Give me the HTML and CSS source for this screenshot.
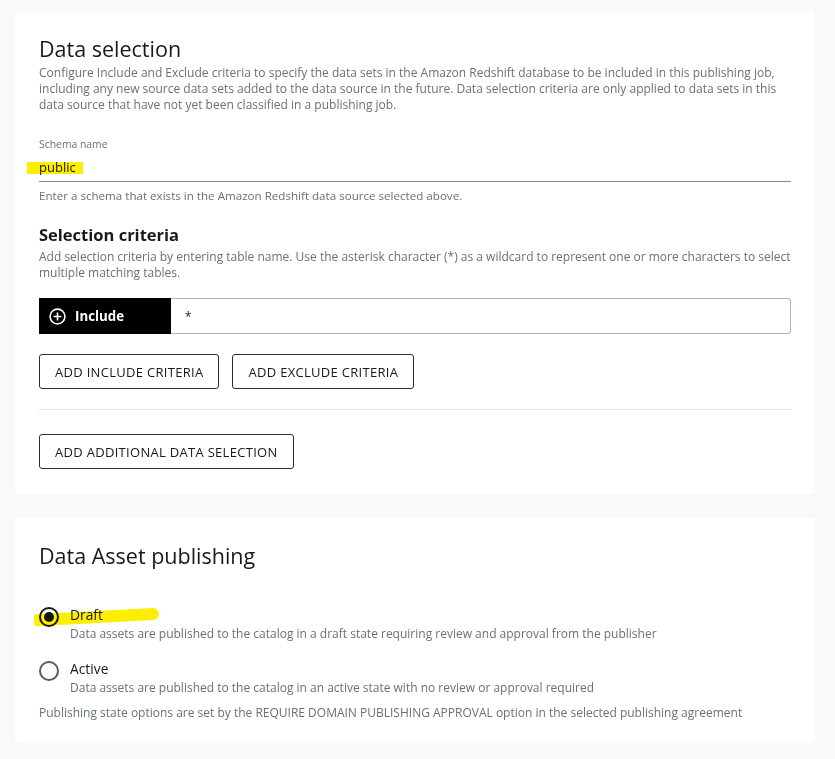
FILE: index.html
```html
<!DOCTYPE html>
<html>
<head>
<meta charset="utf-8">
<link rel="stylesheet" href="styles.css">
</head>
<body>
<div class="page">
  <section class="card card-one">
    <h1 class="title">Data selection</h1>
    <p class="desc">Configure Include and Exclude criteria to specify the data sets in the Amazon Redshift database to be included in this publishing job, including any new source data sets added to the data source in the future. Data selection criteria are only applied to data sets in this data source that have not yet been classified in a publishing job.</p>

    <div class="field">
      <div class="field-label">Schema name</div>
      <div class="field-value"><span class="value-text">public</span><span class="hl-box"></span></div>
      <div class="field-help">Enter a schema that exists in the Amazon Redshift data source selected above.</div>
    </div>

    <h2 class="subtitle">Selection criteria</h2>
    <p class="desc sub-desc">Add selection criteria by entering table name. Use the asterisk character (*) as a wildcard to represent one or more characters to select multiple matching tables.</p>

    <div class="criteria-row">
      <div class="criteria-type">
        <svg class="plus-icon" width="17" height="17" viewBox="0 0 17 17"><circle cx="8.5" cy="8.5" r="7.4" fill="none" stroke="#fff" stroke-width="1.6"/><path d="M8.5 4.6v7.8M4.6 8.5h7.8" stroke="#fff" stroke-width="1.6"/></svg>
        <span>Include</span>
      </div>
      <div class="criteria-input">*</div>
    </div>

    <div class="btn-row">
      <button class="btn">ADD INCLUDE CRITERIA</button>
      <button class="btn">ADD EXCLUDE CRITERIA</button>
    </div>

    <div class="divider"></div>

    <button class="btn btn-wide">ADD ADDITIONAL DATA SELECTION</button>
  </section>

  <section class="card card-two">
    <h1 class="title">Data Asset publishing</h1>

    <div class="radio-group">
      <div class="radio-item">
        <span class="radio checked"></span>
        <div class="radio-text">
          <div class="radio-label">Draft</div>
          <div class="radio-desc">Data assets are published to the catalog in a draft state requiring review and approval from the publisher</div>
        </div>
        <span class="hl-stroke"></span>
      </div>
      <div class="radio-item">
        <span class="radio"></span>
        <div class="radio-text">
          <div class="radio-label">Active</div>
          <div class="radio-desc">Data assets are published to the catalog in an active state with no review or approval required</div>
        </div>
      </div>
    </div>
    <p class="footnote">Publishing state options are set by the REQUIRE DOMAIN PUBLISHING APPROVAL option in the selected publishing agreement</p>
  </section>
</div>
</body>
</html>
```

FILE: styles.css
```css
* { box-sizing: border-box; }
html, body {
  margin: 0;
  padding: 0;
  background: #f9f9f9;
  font-family: "Open Sans", Roboto, "Liberation Sans", Arial, sans-serif;
  color: #16191f;
}
.page {
  width: 835px;
  padding: 11px 20px 0 15px;
  display: flex;
  flex-direction: column;
  gap: 24px;
}
.card {
  background: #fff;
  border-radius: 4px;
  padding: 23px 24px 24px 24px;
  display: flex;
  flex-direction: column;
  align-items: flex-start;
}
.card-one { height: 483px; }
.card-two { height: 225px; }
.title {
  margin: 0;
  font-size: 21.5px;
  font-weight: 400;
  line-height: 30px;
  color: #16191f;
}
.card-one .title { margin-bottom: 1px; }
.desc {
  margin: 0;
  font-size: 12px;
  line-height: 16px;
  color: #687078;
}
.field { width: 100%; margin-top: 24px; }
.field-label {
  font-size: 10.4px;
  line-height: 14px;
  color: #687078;
}
.field-value {
  position: relative;
  margin-top: 6px;
  height: 25px;
  border-bottom: 1px solid #8d8d8d;
  font-size: 13px;
  line-height: 20px;
}
.value-text { position: relative; color: #16191f; }
.hl-box {
  position: absolute;
  left: -12px;
  top: 5px;
  width: 56px;
  height: 12px;
  background: #ffee00;
  mix-blend-mode: multiply;
}
.field-help {
  margin-top: 6px;
  font-size: 11.6px;
  line-height: 16px;
  color: #687078;
}
.subtitle {
  margin: 19px 0 0 0;
  font-size: 16.5px;
  font-weight: 700;
  line-height: 24px;
  color: #16191f;
}
.sub-desc { margin-top: 2px; }
.criteria-row {
  margin-top: 17px;
  width: 100%;
  height: 36px;
  display: flex;
}
.criteria-type {
  width: 132px;
  background: #000;
  color: #fff;
  display: flex;
  align-items: center;
  gap: 9px;
  padding-left: 10px;
  font-size: 13.3px;
  font-weight: 700;
}
.criteria-input {
  flex: 1;
  border: 1px solid #aab7b8;
  border-left: none;
  border-radius: 0 3px 3px 0;
  padding: 9px 14px;
  font-size: 12px;
  color: #16191f;
}
.btn-row {
  margin-top: 20px;
  display: flex;
  gap: 13px;
}
.btn {
  height: 35px;
  background: #fff;
  border: 1px solid #2a2e33;
  border-radius: 3px;
  font-family: inherit;
  font-size: 13px;
  letter-spacing: 0.3px;
  color: #16191f;
  padding: 0 15px;
  cursor: pointer;
}
.divider {
  width: 100%;
  height: 1px;
  background: #e3e3e3;
  margin-top: 20px;
}
.btn-wide { margin-top: 24px; }
.radio-group {
  margin-top: 36px;
  display: flex;
  flex-direction: column;
  gap: 19px;
}
.radio-item {
  position: relative;
  display: flex;
  gap: 11px;
}
.radio {
  position: relative;
  width: 20px;
  height: 20px;
  border-radius: 50%;
  border: 2px solid #545b64;
  flex: none;
}
.radio.checked { border: 2px solid #16191f; }
.radio.checked::after {
  content: "";
  position: absolute;
  left: 3px;
  top: 3px;
  width: 10px;
  height: 10px;
  border-radius: 50%;
  background: #16191f;
}
.hl-stroke {
  position: absolute;
  left: -5px;
  top: 4px;
  width: 125px;
  height: 12px;
  background: #ffee00;
  transform: rotate(-3deg);
  border-radius: 2px 6px 6px 2px;
  mix-blend-mode: multiply;
}
.radio-text { position: relative; }
.radio-label {
  font-size: 13.8px;
  line-height: 16px;
  color: #16191f;
}
.radio-desc {
  margin-top: 3px;
  font-size: 12px;
  line-height: 16px;
  color: #687078;
}
.footnote {
  margin: 9px 0 0 0;
  font-size: 12px;
  line-height: 16px;
  color: #687078;
}
```
